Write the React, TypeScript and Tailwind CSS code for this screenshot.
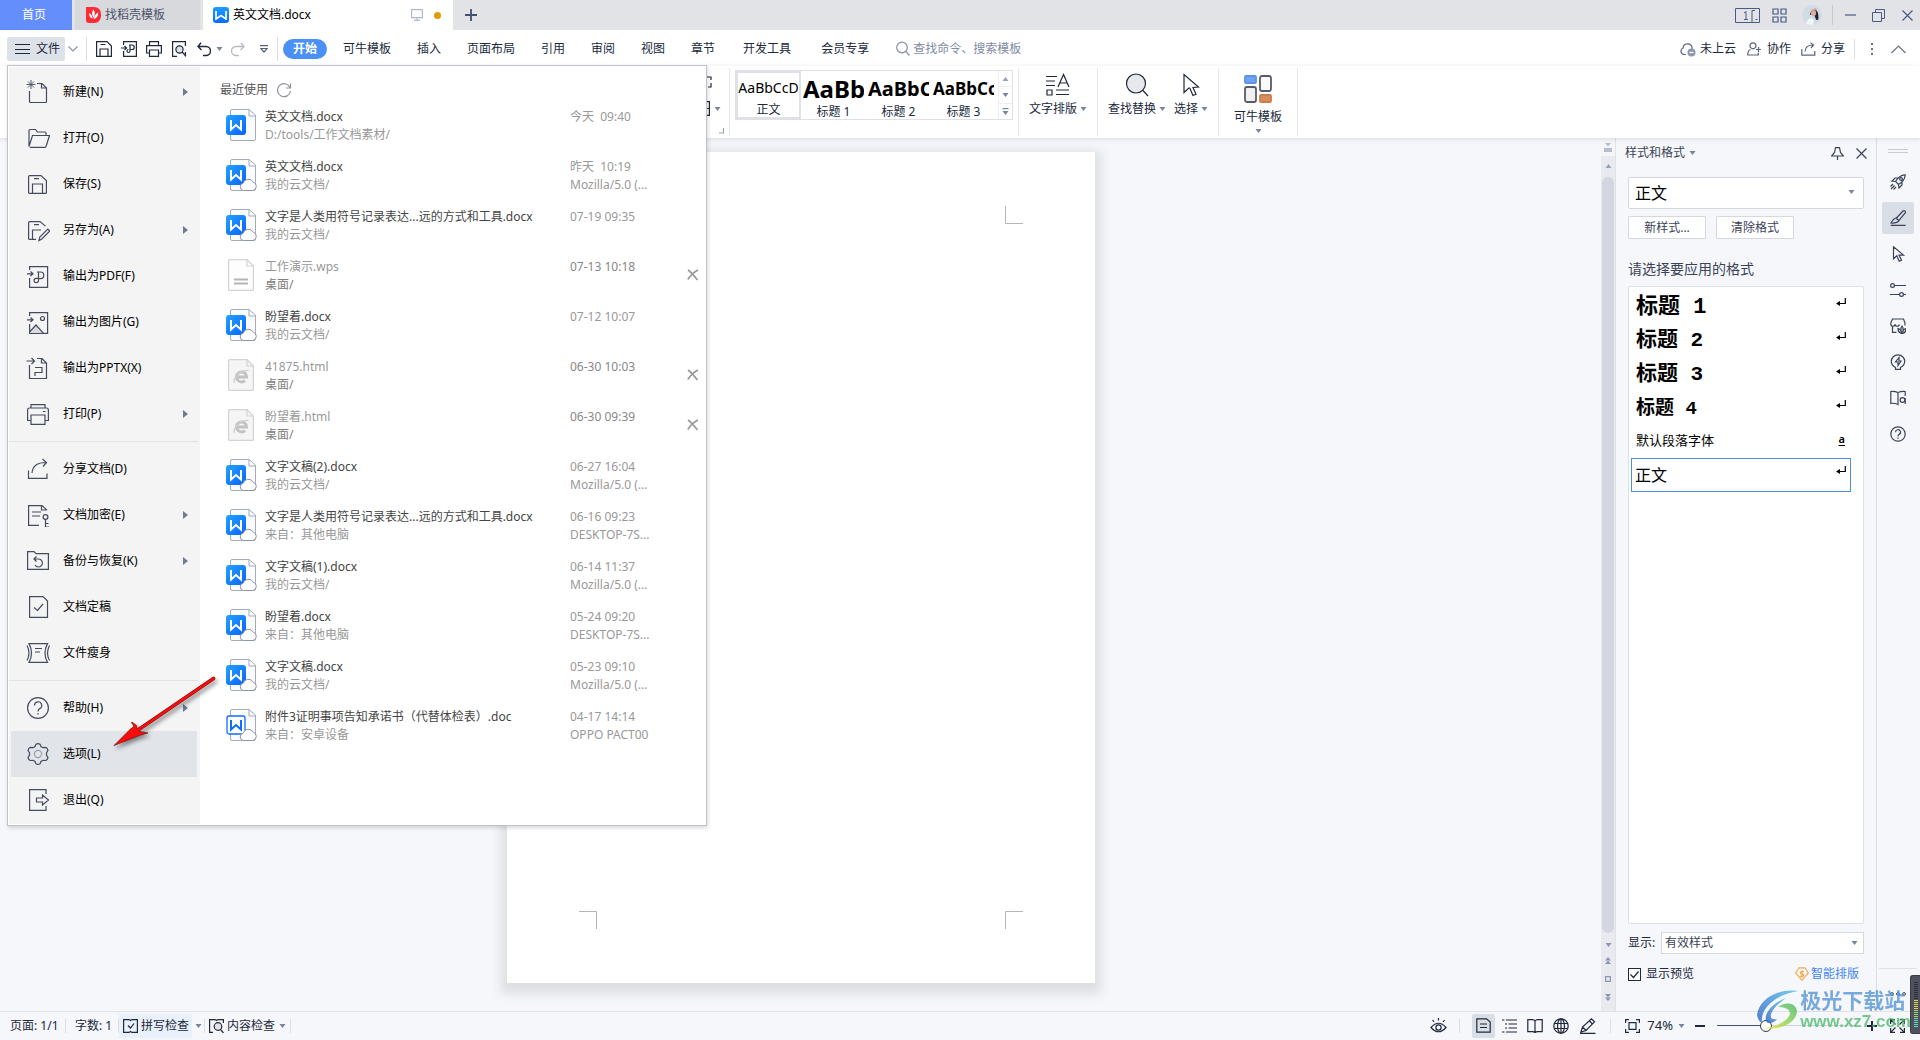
import React from "react";

type IconProps = { w?: number; h?: number; box?: string; className?: string; sw?: number; children: React.ReactNode };

function Svg({ w = 16, h = 16, box, className = "", sw = 1.2, children }: IconProps) {
  return (
    <svg
      width={w}
      height={h}
      viewBox={box ?? `0 0 ${w} ${h}`}
      fill="none"
      stroke="currentColor"
      strokeWidth={sw}
      className={`shrink-0 ${className}`}
      aria-hidden="true"
    >
      {children}
    </svg>
  );
}

function Caret({ className = "text-[#7783a0]" }: { className?: string }) {
  return (
    <Svg w={7} h={4} className={className}>
      <path d="M0.5 0h6L3.5 4z" fill="currentColor" stroke="none" />
    </Svg>
  );
}

function CaretUp() {
  return (
    <Svg w={7} h={4} className="text-[#97a2ba]">
      <path d="M0.5 4h6L3.5 0z" fill="currentColor" stroke="none" />
    </Svg>
  );
}

/* ---------- title bar ---------- */

function TitleBar() {
  return (
    <header className="flex h-[30px] shrink-0 items-stretch bg-[#e1e3e7] text-[12px]">
      <button className="w-[72px] bg-[#648efc] pr-1 text-white">首页</button>
      <button className="ml-[3px] flex w-[125px] items-center gap-1 bg-[#d8d9dc] pl-[11px] text-[#4c5468]">
        <svg width="15" height="16" viewBox="0 0 15 16" className="shrink-0" aria-hidden="true">
          <path d="M0 0h8c4.500 0 7 3 7 8s-2.500 8-7 8H3a3 3 0 0 1-3-3z" fill="#fb2c36" />
          <path d="M7.300 2.500c2 2 2 5 .3 8.500-2-3-2-6-.3-8.500zM3 6c2 .8 3.200 2.500 3.600 5.600C4.300 11 3 9 3 6zM12.300 5.500c0 3.500-1.500 5.800-4.600 6.800.6-3.500 2-5.600 4.600-6.800z" fill="#fff" />
        </svg>
        找稻壳模板
      </button>
      <button className="ml-[3px] flex w-[250px] items-center bg-white pl-[10px] pr-3 text-black">
        <span className="mr-1 flex h-4 w-4 items-center justify-center rounded-[3px] bg-gradient-to-b from-[#1e9bff] to-[#0b6cff] text-white">
          <Svg w={12} h={10} sw={1.7}>
            <path d="M1 1v8L6 5.500 11 9V1" />
          </Svg>
        </span>
        英文文档.docx
        <Svg w={12} h={12} className="ml-auto text-[#b3b9cc]">
          <path d="M.6.6h10.800v8H.6zM6 8.600v3M3 11.400h6" />
        </Svg>
        <span className="ml-[11px] h-[7px] w-[7px] rounded-full bg-[#e59b00]" />
      </button>
      <button className="ml-[11px] w-[14px] text-[#42506f]" aria-label="新建标签">
        <Svg w={14} h={14} sw={1.800}>
          <path d="M7 1v12M1 7h12" />
        </Svg>
      </button>
      <div className="ml-auto flex items-center pr-[7px] text-[#4a5a85]">
        <button aria-label="窗口">
          <Svg w={25} h={15} sw={1}>
            <path d="M.5.500h24v14H.5zM20 2.500h-3v12M9 5l2-1.500v8M9 11.500h4M20.500 11.500h2" />
          </Svg>
        </button>
        <button className="ml-3" aria-label="应用">
          <Svg w={15} h={15}>
            <path d="M1 1h5v5H1zM9 1h5v5H9zM1 9h5v5H1zM9 9h5v5H9z" />
          </Svg>
        </button>
        <button className="ml-[15px]" aria-label="账户">
          <svg width="20" height="20" viewBox="0 0 20 20" aria-hidden="true">
            <circle cx="10" cy="10" r="10" fill="#cfdce4" />
            <path d="M4 19c1-4 3-6 5-6l3 2-1 4.900z" fill="#f1f6f8" />
            <path d="M8 10c0-4 3-6 5.500-5 3 1 3 6 3 9-1 2-3 1-3-1l-2-4z" fill="#2c2430" />
            <ellipse cx="11.500" cy="8" rx="2.600" ry="3" fill="#dcaea6" />
            <path d="M9 5l5-2 1 2-5 1z" fill="#d9a08c" />
          </svg>
        </button>
        <span className="ml-[10px] h-5 w-px bg-[#c4c7cd]" />
        <button className="ml-3" aria-label="最小化">
          <Svg w={11} h={12}>
            <path d="M0 6h11" />
          </Svg>
        </button>
        <button className="ml-4" aria-label="还原">
          <Svg w={13} h={13} sw={1}>
            <path d="M.5 3.500h9v9h-9zM3.500 3.500v-3h9v9h-3" />
          </Svg>
        </button>
        <button className="ml-[17px]" aria-label="关闭">
          <Svg w={11} h={11}>
            <path d="M.5.500l10 10M10.500.500l-10 10" />
          </Svg>
        </button>
      </div>
    </header>
  );
}

/* ---------- menu row ---------- */

const tabs = ["可牛模板", "插入", "页面布局", "引用", "审阅", "视图", "章节"];
const wideTabs = ["开发工具", "会员专享"];

function QuickButton({ label, children, className = "w-[25px]" }: { label: string; children: React.ReactNode; className?: string }) {
  return (
    <button aria-label={label} className={`flex h-6 shrink-0 items-center justify-center ${className}`}>
      {children}
    </button>
  );
}

function MenuRow() {
  return (
    <nav className="flex h-9 shrink-0 items-center bg-white pl-[7px] pr-[13px] pt-[2px] text-[12px] text-[#20283c]">
      <button className="flex h-6 w-[58px] shrink-0 items-center gap-[6px] rounded-[2px] bg-[#dde2e8] pl-2">
        <Svg w={15} h={12} sw={1}>
          <path d="M0 1.500h15M0 6.500h15M0 10.500h15" />
        </Svg>
        文件
      </button>
      <QuickButton label="菜单" className="w-[15px] text-[#8a93a8]">
        <Svg w={10} h={6}>
          <path d="M.5.500L5 5 9.500.500" />
        </Svg>
      </QuickButton>
      <span className="ml-[6px] mr-1 h-6 w-px bg-[#dcdee3]" />
      <QuickButton label="保存">
        <Svg w={16} h={16}>
          <path d="M.6.600h10.400l4.400 4.400v10.400H.6zM4 15V8h8v7M4.500 3.500h5" />
        </Svg>
      </QuickButton>
      <QuickButton label="输出为PDF">
        <Svg w={16} h={16}>
          <path d="M2.600 4V.6h12.800v14.800H2.600V10M0 7h5M3.500 5l2 2-2 2" />
          <path d="M8 4h3a2.200 2.200 0 0 1 0 4.500H9.500M9 4v6a1.500 1.500 0 1 1-1.500-1.500" />
        </Svg>
      </QuickButton>
      <QuickButton label="打印">
        <Svg w={16} h={16}>
          <path d="M3.500 4V.6h9V4M3.500 12H.6V4.600h14.800V12h-2.900M3.500 9h9v6.400h-9z" />
        </Svg>
      </QuickButton>
      <QuickButton label="打印预览">
        <Svg w={16} h={16}>
          <path d="M6 15.400H1.600V.6h12.800V5M14.400 11v4.400" />
          <circle cx="8.500" cy="8.500" r="3.600" fill="#dfe1e6" />
          <path d="M11 11l4 4" />
        </Svg>
      </QuickButton>
      <QuickButton label="撤销">
        <Svg w={14} h={15} sw={1.400}>
          <path d="M4 .8L1 4.500l3.500 3.500M1 4.500h8a4.200 4.200 0 0 1 0 9H6" />
        </Svg>
      </QuickButton>
      <QuickButton label="撤销历史" className="w-[7px]">
        <Caret />
      </QuickButton>
      <QuickButton label="恢复" className="w-[30px] text-[#b6bac3]">
        <Svg w={14} h={15} sw={1.300}>
          <path d="M10 .8l3 3.700-3.500 3.500M13 4.500H5a4.200 4.200 0 0 0 0 9h3" />
        </Svg>
      </QuickButton>
      <QuickButton label="自定义" className="w-[22px] text-[#596273]">
        <Svg w={8} h={8}>
          <path d="M0 .6h8M.8 3.500h6.400L4 7z" />
        </Svg>
      </QuickButton>
      <span className="mx-[2px] h-6 w-px bg-[#dcdee3]" />
      <button className="ml-[3px] mr-[3px] h-5 w-11 shrink-0 rounded-full bg-[#4b91f5] font-bold text-white">开始</button>
      {tabs.map((t) => (
        <button key={t} className="shrink-0 px-[13px]">
          {t}
        </button>
      ))}
      {wideTabs.map((t) => (
        <button key={t} className="shrink-0 px-[15px]">
          {t}
        </button>
      ))}
      <label className="ml-3 flex items-center gap-[3px] text-[#8791ab]">
        <Svg w={14} h={16}>
          <circle cx="6" cy="6.500" r="5.300" />
          <path d="M10 10.500l3.500 4" />
        </Svg>
        <input
          className="w-[120px] bg-transparent outline-none placeholder:text-[#7f8aa6]"
          placeholder="查找命令、搜索模板"
          aria-label="查找命令、搜索模板"
        />
      </label>
      <div className="ml-auto flex shrink-0 items-center">
        <button className="flex items-center gap-1">
          <Svg w={16} h={15} className="text-[#5b647c]">
            <path d="M6 12.500H4a3.400 3.400 0 0 1-1-6.500A4.600 4.600 0 0 1 12 5.200V7" />
            <circle cx="11.500" cy="10.500" r="4" fill="#8f98af" stroke="none" />
            <path d="M9.500 10.500h4" stroke="#fff" />
          </Svg>
          未上云
        </button>
        <button className="ml-[11px] flex items-center gap-1">
          <Svg w={16} h={14} className="text-[#5b647c]">
            <circle cx="6" cy="3.800" r="3" />
            <path d="M3.500 7.500C1.500 8 .8 9.500.8 13h10.500V10.500M9 7.500h5M11.500 5v5" />
          </Svg>
          协作
        </button>
        <button className="ml-[10px] flex items-center gap-1">
          <Svg w={16} h={14} className="text-[#5b647c]">
            <path d="M.8 7v6.200h13V9M4 9.500c.3-4 3-6.500 8-6.500M9.500.6L12.500 3 10 6" />
          </Svg>
          分享
        </button>
        <span className="ml-[9px] h-5 w-px bg-[#dcdee3]" />
        <button className="ml-4 text-[#6b7285]" aria-label="更多">
          <Svg w={2} h={12}>
            <path d="M0 0h2v2H0zM0 5h2v2H0zM0 10h2v2H0z" fill="currentColor" stroke="none" />
          </Svg>
        </button>
        <button className="ml-[18px] mr-px text-[#6b7285]" aria-label="折叠功能区">
          <Svg w={15} h={9}>
            <path d="M.5 8L7.500 1l7 7" />
          </Svg>
        </button>
      </div>
    </nav>
  );
}

/* ---------- ribbon ---------- */

function Divider() {
  return <span className="h-[68px] w-px shrink-0 self-center bg-[#e7e8ec]" />;
}

const gallery = [
  { name: "标题 1", sample: "AaBb", cls: "text-[24px] font-bold" },
  { name: "标题 2", sample: "AaBbC", cls: "text-[20px] font-bold" },
  { name: "标题 3", sample: "AaBbCc", cls: "text-[17px] font-bold" },
];

function Ribbon() {
  return (
    <section className="relative z-10 flex h-[72px] shrink-0 bg-white text-[12px] text-[#20283c] shadow-[0_1px_5px_rgba(0,0,0,0.12)]">
      <div className="flex w-[729px] shrink-0 flex-col items-end pr-[5px] pt-[10px]">
        <Svg w={16} h={12} className="mr-[12px]">
          <path d="M1 4V1h14v3M15 7v4h-3M1 7v4" />
        </Svg>
        <div className="mt-[13px] flex items-center gap-1 pr-[3px]">
          <Svg w={14} h={15}>
            <path d="M.6.600h12.800v13.800H.6zM9 7.500h4" />
          </Svg>
          <Caret />
        </div>
        <Svg w={5} h={6} className="mt-auto mb-1 text-[#97a2ba]">
          <path d="M0 5h4.500V0" />
        </Svg>
      </div>
      <Divider />
      <div className="ml-[5px] mt-1 flex h-[50px] w-[278px] shrink-0 border border-[#dfe1e6]">
        <button className="w-[65px] shrink-0 border-2 border-[#dfe1e6]">
          <span className="block h-[30px] overflow-hidden whitespace-nowrap text-[14px] leading-[30px] text-black">AaBbCcD</span>
          <span className="block leading-[14px]">正文</span>
        </button>
        {gallery.map((g) => (
          <button key={g.name} className="w-[65px] shrink-0 px-[2px] pt-[2px]">
            <span className={`block h-[30px] overflow-hidden whitespace-nowrap text-left leading-[28px] text-black ${g.cls}`}>
              {g.sample}
            </span>
            <span className="block leading-[13px]">{g.name}</span>
          </button>
        ))}
        <div className="ml-auto flex w-[14px] flex-col border-l border-[#eceef2]">
          <button aria-label="上一行" className="flex h-4 items-center justify-center border-b border-[#eceef2]">
            <CaretUp />
          </button>
          <button aria-label="下一行" className="flex h-[17px] items-center justify-center border-b border-[#eceef2]">
            <Caret />
          </button>
          <button aria-label="更多样式" className="flex flex-1 flex-col items-center justify-center gap-[2px] text-[#7783a0]">
            <Svg w={7} h={7}>
              <path d="M.5.600h6" />
              <path d="M.5 3h6L3.500 7z" fill="currentColor" stroke="none" />
            </Svg>
          </button>
        </div>
      </div>
      <span className="w-[5px]" />
      <Divider />
      <button className="flex w-[78px] shrink-0 flex-col items-center pt-[7px]">
        <Svg w={26} h={24}>
          <path d="M1 3.500h11M1 8h9M1 12.500h9M2 17h5v5H2zM11 17h13M11 21.500h13M13 14L18.500 1.500 24 14M14.500 10h8" />
        </Svg>
        <span className="mt-1 flex items-center gap-[3px] leading-4">
          文字排版
          <Caret />
        </span>
      </button>
      <Divider />
      <button className="ml-2 flex w-[62px] shrink-0 flex-col items-center pt-[7px]">
        <Svg w={24} h={24}>
          <circle cx="11" cy="10.500" r="9.500" fill="#e6e8ec" />
          <path d="M18 17.500l5 5.500" />
        </Svg>
        <span className="mt-1 flex items-center gap-[3px] leading-4">
          查找替换
          <Caret />
        </span>
      </button>
      <button className="ml-1 mr-2 flex w-[38px] shrink-0 flex-col items-center pt-[7px]">
        <Svg w={18} h={24}>
          <path d="M2 1.500v18l4.800-4.500h1L11 22.500l3-1.300-3-6.700 5.500-.5z" />
        </Svg>
        <span className="mt-1 flex items-center gap-[3px] leading-4">
          选择
          <Caret />
        </span>
      </button>
      <Divider />
      <button className="flex w-[78px] shrink-0 flex-col items-center pt-[9px]">
        <Svg w={28} h={28} sw={1.800} className="text-[#585c66]">
          <rect x="1" y="1" width="11" height="7" rx="1" fill="#71a4f0" stroke="#5b93ea" />
          <rect x="16" y="1" width="11" height="15" rx="2" fill="#fafafa" />
          <rect x="1" y="12" width="11" height="15" rx="2" fill="#f0f0f0" />
          <rect x="16" y="20" width="11" height="7" rx="1" fill="#d98c5c" stroke="#cd7d4d" />
        </Svg>
        <span className="mt-[6px] leading-4">可牛模板</span>
        <span className="mt-1">
          <Caret />
        </span>
      </button>
      <Divider />
    </section>
  );
}

/* ---------- file menu ---------- */

const icons: Record<string, React.ReactNode> = {
  new: (
    <>
      <path d="M3.500 11v10.500q0 1 1 1h15q1 0 1-1V8L16 3.500h-5M15.500 3.500V8h5" />
      <path d="M5 0v9M.5 4.500h9M2 1.500l6 6M8 1.500l-6 6" strokeWidth="0.900" />
    </>
  ),
  open: <path d="M3 20.500V4.500q0-1 1-1h5.500l2 2.500H19q1 0 1 1v2M3 20.500L6.500 9.500h17L20 20.500q-.3.800-1.200.8H3.800" />,
  save: <path d="M2.600 4.600q0-1 1-1H15l5.400 4.900v11.900q0 1-1 1H3.600q-1 0-1-1zM6.500 21V12h10v9M8 6.600h5" />,
  saveAs: (
    <>
      <path d="M10 21.400H3.600q-1 0-1-1V4.600q0-1 1-1H14l5.500 4.500M6.500 21V12H15M8 6.600h5" />
      <path d="M13 22.500l.8-3.500 8-8 2 2-8 8z" />
    </>
  ),
  pdf: (
    <>
      <path d="M3.600 6V2.600h18v20.800h-18V14M1 9.800h6M4.500 7.500L7 9.800 4.500 12" />
      <path d="M11 8h3.500a3.300 3.300 0 0 1 0 6.600h-2M12.500 8v8.500a2.200 2.200 0 1 1-2.200-2.200h2.200" />
    </>
  ),
  image: (
    <>
      <path d="M3.600 6V2.600h18v20.800h-18V14M1 9.800h6M4.500 7.500L7 9.800 4.500 12" />
      <circle cx="16.500" cy="8.500" r="2" />
      <path d="M4 23l6-8 6 8z" fill="#d8dadf" stroke="none" />
      <path d="M4 21.500l6-6.500 7.500 8.400" />
    </>
  ),
  pptx: (
    <>
      <path d="M3.500 9v13.500h17V7L16 2.500h-5M15.500 2.500V7h5M.5 5h8M5.500 2l3 3-3 3" />
      <path d="M9 11.500h7v5H9V20" />
    </>
  ),
  print: <path d="M5 6V2.600h14V6M5 18.500H1.600V8q0-2 2-2h16.800q2 0 2 2v10.500H19M5 13h14v9.400H5zM17 9.500h2.500" />,
  share: <path d="M2.500 13.500v7.900h18.500v-5M6 16C6.500 8.500 12 5.500 20 5.500M16.500 2l4 3.500-3.500 4" />,
  lock: (
    <>
      <path d="M13 22.400H2.600V2.600H16l5 4.500M15.500 2.600V7h5M6 9h9M6 13h8" />
      <circle cx="19.500" cy="14" r="2.400" />
      <path d="M19.500 16.500v7.500h3.500M19.500 20.500h3" />
    </>
  ),
  backup: <path d="M1.600 2.600h6.400l2 2h12.400v15.800H1.600zM8 10h4.500a4 4 0 1 1-3.500 6M10.500 7.500L8 10l2.500 2.500" />,
  final: <path d="M3.600 1.600H17l4.500 4.500v16.300H3.600zM8 12.500l3.500 3 5.500-6.500" />,
  slim: <path d="M3 2.600h18.500q-5 9.400 0 18.800H3Q8 12 3 2.600zM9 7.500h7M9 11h5M1 4.500q4 7.500 0 15M23.500 4.500q-4 7.500 0 15" />,
  help: (
    <>
      <circle cx="12" cy="12" r="10.400" />
      <path d="M8.500 9.500a3.600 3.600 0 1 1 5.200 3.100q-1.700.9-1.700 3M12 17v1.500" />
    </>
  ),
  gear: (
    <>
      <path d="M10 2.200q2-1.300 4 0l1 2.300 2 1.200 2.800-.3q1.500.5 2.200 3l-1.500 2.400v2.400l1.500 2.300q-.6 2.500-2.200 3l-2.800-.2-2 1.200-1 2.300q-2 1.200-4 0l-1-2.300-2-1.200-2.800.2Q2.600 18 2 15.500l1.500-2.300v-2.400L2 8.400q.6-2.500 2.200-3l2.800.3 2-1.200z" />
      <circle cx="12" cy="12" r="3.600" className="text-[#9aa0ae]" stroke="currentColor" />
    </>
  ),
  exit: <path d="M20 6V1.600H3.600v20.800H20V18M10.500 10h6V7l6 5-6 5v-3h-6z" />,
};

type MenuItem = { icon: string; label: string; sub?: boolean; active?: boolean };

const menuGroups: MenuItem[][] = [
  [
    { icon: "new", label: "新建(N)", sub: true },
    { icon: "open", label: "打开(O)" },
    { icon: "save", label: "保存(S)" },
    { icon: "saveAs", label: "另存为(A)", sub: true },
    { icon: "pdf", label: "输出为PDF(F)" },
    { icon: "image", label: "输出为图片(G)" },
    { icon: "pptx", label: "输出为PPTX(X)" },
    { icon: "print", label: "打印(P)", sub: true },
  ],
  [
    { icon: "share", label: "分享文档(D)" },
    { icon: "lock", label: "文档加密(E)", sub: true },
    { icon: "backup", label: "备份与恢复(K)", sub: true },
    { icon: "final", label: "文档定稿" },
    { icon: "slim", label: "文件瘦身" },
  ],
  [
    { icon: "help", label: "帮助(H)", sub: true },
    { icon: "gear", label: "选项(L)", active: true },
    { icon: "exit", label: "退出(Q)" },
  ],
];

type Kind = "local" | "cloud" | "wps" | "html" | "doc";
type Recent = { name: string; path: string; date: string; from?: string; kind: Kind };

const recents: Recent[] = [
  { name: "英文文档.docx", path: "D:/tools/工作文档素材/", date: "今天\u00a0 09:40", kind: "local" },
  { name: "英文文档.docx", path: "我的云文档/", date: "昨天\u00a0 10:19", from: "Mozilla/5.0 (...", kind: "cloud" },
  { name: "文字是人类用符号记录表达...远的方式和工具.docx", path: "我的云文档/", date: "07-19 09:35", kind: "cloud" },
  { name: "工作演示.wps", path: "桌面/", date: "07-13 10:18", kind: "wps" },
  { name: "盼望着.docx", path: "我的云文档/", date: "07-12 10:07", kind: "cloud" },
  { name: "41875.html", path: "桌面/", date: "06-30 10:03", kind: "html" },
  { name: "盼望着.html", path: "桌面/", date: "06-30 09:39", kind: "html" },
  { name: "文字文稿(2).docx", path: "我的云文档/", date: "06-27 16:04", from: "Mozilla/5.0 (...", kind: "cloud" },
  { name: "文字是人类用符号记录表达...远的方式和工具.docx", path: "来自：其他电脑", date: "06-16 09:23", from: "DESKTOP-7S...", kind: "cloud" },
  { name: "文字文稿(1).docx", path: "我的云文档/", date: "06-14 11:37", from: "Mozilla/5.0 (...", kind: "cloud" },
  { name: "盼望着.docx", path: "来自：其他电脑", date: "05-24 09:20", from: "DESKTOP-7S...", kind: "cloud" },
  { name: "文字文稿.docx", path: "我的云文档/", date: "05-23 09:10", from: "Mozilla/5.0 (...", kind: "cloud" },
  { name: "附件3证明事项告知承诺书（代替体检表）.doc", path: "来自：安卓设备", date: "04-17 14:14", from: "OPPO PACT00", kind: "doc" },
];

function FileIcon({ kind }: { kind: Kind }) {
  if (kind === "wps" || kind === "html") {
    return (
      <Svg w={32} h={34} className="text-[#d3d3d3]">
        <path d="M2.600 2.600q0-1 1-1H21l6.400 6.400v23.400q0 1-1 1H3.600q-1 0-1-1z" fill={kind === "html" ? "#f5f5f5" : "#fdfdfd"} />
        <path d="M21 1.600V8h6.400" />
        {kind === "wps" ? (
          <path d="M8 21.500h14M8 25.500h14" stroke="#b5b5b5" strokeWidth="2" />
        ) : (
          <>
            <path d="M10.500 19h10a5 5 0 1 0-1.500 3.500" stroke="#c2c2c2" strokeWidth="3" />
            <path d="M8.500 25C6 21 15 11.500 22.500 12.500" stroke="#cfcfcf" strokeWidth="1.400" />
          </>
        )}
      </Svg>
    );
  }
  const outlined = kind === "doc";
  return (
    <Svg w={32} h={34} className="text-[#a3abbd]" sw={1}>
      <path d="M4.500 3q0-1.500 1.500-1.500h17L29.500 7v24q0 1.500-1.500 1.500H6q-1.500 0-1.500-1.500z" fill="#fbfcfd" />
      <path d="M23 1.500V8h6.500" />
      <defs>
        <linearGradient id="wfill" x1="0" y1="0" x2="1" y2="1">
          <stop offset="0" stopColor="#22a3ff" />
          <stop offset="1" stopColor="#0a62ff" />
        </linearGradient>
      </defs>
      {outlined ? (
        <rect x="1" y="8" width="18" height="18" rx="2" fill="#fff" stroke="#0d6dff" strokeWidth="1.300" />
      ) : (
        <rect x="0" y="7" width="20" height="20" rx="3" fill="url(#wfill)" stroke="none" />
      )}
      <path d="M5 12v9.500l5-4.500 5 4.500V12" stroke={outlined ? "#0d6dff" : "#fff"} strokeWidth="2" />
      {kind !== "local" && (
        <path
          d="M17.500 32.500a3.700 3.700 0 0 1-.3-7.300 5.400 5.400 0 0 1 10-1 4.300 4.300 0 0 1-.2 8.300z"
          fill="#fff"
          stroke="#8e94a3"
        />
      )}
    </Svg>
  );
}

function FileMenu() {
  return (
    <div className="absolute left-[7px] top-[65px] z-20 flex w-[700px] border border-[#bfc2c8] bg-white text-[12px] shadow-[1px_2px_4px_rgba(0,0,0,0.15)]">
      <nav className="m-px w-[191px] shrink-0 bg-[#f4f4f4] pb-px pt-[2px] text-black">
        {menuGroups.map((group, i) => (
          <div key={i}>
            {i > 0 && (
              <div className="mr-[2px] h-[9px] pt-1">
                <div className="h-px bg-[#e2e3e6]" />
              </div>
            )}
            {group.map((item) => (
              <button
                key={item.label}
                className={`mx-[2px] flex h-[46px] w-[186px] items-center pl-[15px] pr-[9px] ${item.active ? "bg-[#e1e4e9]" : ""}`}
              >
                <Svg w={24} h={24} className="text-[#454b5e]">
                  {icons[item.icon]}
                </Svg>
                <span className="ml-[13px]">{item.label}</span>
                {item.sub && (
                  <Svg w={5} h={8} className="ml-auto text-[#6e7b98]">
                    <path d="M0 0v8l5-4z" fill="currentColor" stroke="none" />
                  </Svg>
                )}
              </button>
            ))}
          </div>
        ))}
      </nav>
      <div className="min-w-0 flex-1 pl-[19px]">
        <div className="flex h-[38px] items-center gap-2 pt-[10px] text-[#555]">
          最近使用
          <button aria-label="刷新">
            <Svg w={16} h={16} className="text-[#8f939c]">
              <path d="M14 5.500A6.500 6.500 0 1 0 14.500 9M14.500 1.500v4.500H10" />
            </Svg>
          </button>
        </div>
        <ul>
          {recents.map((r, i) => {
            const gone = r.kind === "wps" || r.kind === "html";
            return (
              <li key={i} className="flex h-[50px] items-start pt-1 leading-[18px] text-[#999]">
                <span className="ml-[6px]">
                  <FileIcon kind={r.kind} />
                </span>
                <a href="#open" className="ml-[7px] w-[305px] shrink-0 whitespace-nowrap">
                  <span className={`block ${gone ? "text-[#999]" : "text-[#444]"}`}>{r.name}</span>
                  <span className={`block ${gone ? "text-[#808080]" : ""}`}>{r.path}</span>
                </a>
                <div className={`w-[117px] shrink-0 whitespace-nowrap ${gone ? "text-[#888]" : ""}`}>
                  <div>{r.date}</div>
                  <div>{r.from}</div>
                </div>
                {gone && (
                  <button aria-label="移除" className="mt-[11px]">
                    <Svg w={12} h={12} sw={1.600} className="text-[#999]">
                      <path d="M1 1q4 3 9.500 10M11 1Q5 4 .8 10.500" />
                    </Svg>
                  </button>
                )}
              </li>
            );
          })}
        </ul>
      </div>
    </div>
  );
}

/* ---------- workspace ---------- */

function Mark({ className, d }: { className: string; d: string }) {
  return (
    <Svg w={18} h={18} sw={1} className={`absolute text-[#b5b5b5] ${className}`}>
      <path d={d} />
    </Svg>
  );
}

function Canvas() {
  return (
    <main className="flex min-w-0 flex-1 justify-center overflow-hidden pt-[14px]">
      <article className="relative h-[831px] w-[588px] shrink-0 bg-white shadow-[0_5px_10px_6px_rgba(50,54,64,0.12)]">
        <Mark className="left-[72px] top-[54px]" d="M17.500 0v17.500H0" />
        <Mark className="right-[72px] top-[54px]" d="M.5 0v17.500H18" />
        <Mark className="bottom-[54px] left-[72px]" d="M17.500 18V.5H0" />
        <Mark className="bottom-[54px] right-[72px]" d="M.5 18V.5H18" />
      </article>
    </main>
  );
}

function ScrollBar() {
  return (
    <div className="flex w-[14px] shrink-0 flex-col items-center bg-[#e9eaf0] text-[#8b96b0]">
      <div className="flex h-[18px] w-full items-center justify-center bg-[#f5f6f8] text-[#b6bccd]">
        <Svg w={8} h={9}>
          <path d="M1 0h6L4 3.500zM0 5h8v4H0z" fill="currentColor" stroke="none" />
        </Svg>
      </div>
      <button aria-label="向上滚动" className="flex h-[21px] items-center pb-[2px]">
        <CaretUp />
      </button>
      <div className="w-3 flex-1 rounded-full bg-[#d3d6e0]" />
      <button aria-label="向下滚动" className="flex h-[24px] items-center">
        <Caret className="text-[#8b96b0]" />
      </button>
      <div className="flex h-[54px] flex-col items-center gap-[12px]">
        <Svg w={6} h={7}>
          <path d="M0 3.500h6L3 0zM0 7h6L3 3.500z" fill="currentColor" stroke="none" />
        </Svg>
        <Svg w={6} h={6}>
          <path d="M.6.600h4.800v4.800H.6z" />
        </Svg>
        <Svg w={6} h={7}>
          <path d="M0 0h6L3 3.500zM0 3.500h6L3 7z" fill="currentColor" stroke="none" />
        </Svg>
      </div>
    </div>
  );
}

function ReturnMark() {
  return (
    <Svg w={10} h={9} sw={1.200} className="mb-[10px] text-black">
      <path d="M9.300 0v5.500H2" />
      <path d="M0 5.500L4 3v5z" fill="currentColor" stroke="none" />
    </Svg>
  );
}

const styleItems = [
  { name: "标题 1", cls: "text-[22px] font-bold" },
  { name: "标题 2", cls: "text-[21px] font-bold" },
  { name: "标题 3", cls: "text-[21px] font-bold" },
  { name: "标题 4", cls: "text-[19px] font-bold" },
];

const mono = "font-['Liberation_Mono','Noto_Sans_CJK_SC',monospace]";

function SelectArrow({ className }: { className: string }) {
  return (
    <span className={`pointer-events-none absolute ${className}`}>
      <Caret />
    </span>
  );
}

function StylePanel() {
  return (
    <aside className="flex w-[261px] shrink-0 flex-col border-l border-[#e0e2e8] pb-7 pl-3 pr-3 text-[12px] text-[#3b4358]">
      <div className="-mx-[3px] flex h-[30px] shrink-0 items-center">
        <button className="flex items-center gap-1">
          样式和格式
          <Caret />
        </button>
        <button aria-label="固定" className="ml-auto">
          <Svg w={13} h={13}>
            <path d="M4 .6h5M4.500.600L3.500 5.500.6 9h11.800L9.500 5.500l-1-4.900M6.500 9v4" />
          </Svg>
        </button>
        <button aria-label="关闭面板" className="ml-3">
          <Svg w={11} h={11}>
            <path d="M.5.500l10 10M10.500.500l-10 10" />
          </Svg>
        </button>
      </div>
      <div className="relative mt-[9px] shrink-0">
        <select
          aria-label="当前样式"
          className="h-8 w-full appearance-none rounded-[2px] border border-[#d5d8df] bg-white pl-[6px] text-[16px] text-black"
        >
          <option>正文</option>
        </select>
        <SelectArrow className="right-[9px] top-[13px] flex" />
      </div>
      <div className="mt-[7px] flex shrink-0 gap-[10px]">
        <button className="h-[23px] w-[78px] rounded-[1px] border border-[#d5d8df] bg-white">新样式...</button>
        <button className="h-[23px] w-[78px] rounded-[1px] border border-[#d5d8df] bg-white">清除格式</button>
      </div>
      <h2 className="mt-5 shrink-0 text-[14px] leading-5">请选择要应用的格式</h2>
      <ul className="mt-[7px] flex-1 rounded-[2px] border border-[#dfe1e6] bg-white pl-[2px] pr-3 pt-px text-black">
        {styleItems.map((s) => (
          <li key={s.name} className={`flex h-[34px] items-center justify-between pl-[5px] pr-[5px] pt-1 ${mono} ${s.cls}`}>
            {s.name}
            <ReturnMark />
          </li>
        ))}
        <li className="flex h-[34px] items-center justify-between pl-[5px] pr-[6px] text-[13px]">
          默认段落字体
          <span className="pb-1 text-[11px] font-semibold underline underline-offset-2">a</span>
        </li>
        <li className="flex h-[34px] items-center justify-between border border-[#4a90e2] pl-[3px] pr-1 text-[16px]">
          正文
          <ReturnMark />
        </li>
      </ul>
      <div className="mt-2 flex shrink-0 items-center gap-[6px] text-[#20283c]">
        <label htmlFor="shown" className="w-[27px] whitespace-nowrap">
          显示:
        </label>
        <div className="relative flex-1">
          <select
            id="shown"
            className="block h-[22px] w-full appearance-none border border-[#d5d8df] bg-white pl-[3px] text-[12px] text-[#3b4358]"
          >
            <option>有效样式</option>
          </select>
          <SelectArrow className="right-[6px] top-[9px] flex" />
        </div>
      </div>
      <div className="mt-[11px] flex h-[18px] shrink-0 items-center justify-between pr-[5px]">
        <label className="flex items-center gap-[5px] text-[#20283c]">
          <span className="relative flex">
            <input type="checkbox" defaultChecked className="h-[13px] w-[13px] appearance-none border border-[#20283c] bg-white" />
            <Svg w={13} h={13} className="pointer-events-none absolute left-0 top-0">
              <path d="M2.500 6.500l3 3 5-6" />
            </Svg>
          </span>
          显示预览
        </label>
        <a href="#layout" className="flex items-center gap-[2px] text-[#3f84f5]">
          <Svg w={14} h={14} className="text-[#f3ab4c]">
            <path d="M4 .8h6L13.300 6 7 13.300.7 6z" />
            <path d="M9 4.500H6.500a1.200 1.200 0 0 0 0 2.400h1a1.200 1.200 0 0 1 0 2.400H5M7 3.500v7" />
          </Svg>
          智能排版
        </a>
      </div>
    </aside>
  );
}

const sideIcons: { label: string; node: React.ReactNode }[] = [
  {
    label: "快捷工具",
    node: (
      <>
        <path d="M5.500 7.500C8 3 11.500 1 15.200.800 15 4.500 13 8 8.500 10.500zM5.500 7.500L2 7l3-3h3M8.500 10.500l.5 3.500 3-3V8M3 10l-2.500 2.500M4.500 11.500L1 15M6 13l-2.500 2.500" />
        <circle cx="11" cy="5" r="1.400" />
      </>
    ),
  },
  { label: "样式", node: <path d="M.8 15.300h14.700M1 13q2.500-4.500 5-5l3 2.700Q7 13.500 1 13zM6.500 8L13 1q1-.8 2 .2t0 2L9.200 10.200" /> },
  { label: "选择", node: <path d="M3.500.8v12l3.300-3 2.400 5.500 2.300-1-2.500-5.200H13.500z" /> },
  {
    label: "属性",
    node: (
      <>
        <circle cx="2.500" cy="3.500" r="1.900" />
        <circle cx="11.500" cy="12.500" r="1.900" />
        <path d="M4.500 3.500H16M0 12.500h9.500M13.500 12.500H16" />
      </>
    ),
  },
  {
    label: "稻壳",
    node: (
      <>
        <path d="M2.500 8V14.400h4M.8 5L2.500 1h11L15 5v2.500M.8 5v1.500a2.200 2.200 0 0 0 4.300 0 2.200 2.200 0 0 0 4.300 0" />
        <path d="M12 8q2.500 3.500 0 7.500-2.500-4 0-7.500zM8 10.500q3 .5 3.800 5Q8 15 8 10.500zM16 10.500q-3 .5-3.800 5Q16 15 16 10.500z" fill="#c9ccd4" />
      </>
    ),
  },
  { label: "灵感", node: <path d="M5.500 13.500C2.500 12 1.300 10 1.300 7.300a6.700 6.500 0 0 1 13.400 0c0 2.700-1.200 4.700-4.200 6.200v1.900h-5zM9 3.500L5.500 8H8v3.500L11 7H9z" /> },
  {
    label: "查阅",
    node: (
      <>
        <path d="M8 2.500Q4.500 1 .8 1.500v11.800Q5 13 8 14.500zM8 2.500Q11.500 1 15.200 1.500V6" />
        <circle cx="12.500" cy="10" r="2.400" />
        <path d="M15.200 8v6" />
      </>
    ),
  },
  {
    label: "帮助",
    node: (
      <>
        <circle cx="8" cy="8" r="7.200" />
        <path d="M5.500 6.200a2.500 2.500 0 1 1 3.700 2.200Q8 9 8 10.400M8 11.500v1.200" />
      </>
    ),
  },
];

function SideBar() {
  return (
    <aside className="flex w-11 shrink-0 flex-col items-center border-l border-[#dcdee5] pr-px text-[#3b4358]">
      <div className="mb-[13px] mt-[11px] h-1 w-5 border-y border-[#c9ccd4]" />
      <div className="flex flex-col gap-1">
        {sideIcons.map((s) => (
          <button
            key={s.label}
            aria-label={s.label}
            className={`flex h-8 w-8 items-center justify-center rounded-[2px] ${s.label === "样式" ? "bg-[#d9dde5]" : ""}`}
          >
            <Svg w={16} h={16}>{s.node}</Svg>
          </button>
        ))}
      </div>
      <div className="mt-auto flex h-[43px] w-[38px] justify-center border-t border-[#dfe1e6] pt-[23px]">
        <Svg w={16} h={4} sw={1}>
          <circle cx="2" cy="2" r="1.400" />
          <circle cx="8" cy="2" r="1.400" />
          <circle cx="14" cy="2" r="1.400" />
        </Svg>
      </div>
    </aside>
  );
}

/* ---------- status bar ---------- */

function Sep({ className = "" }: { className?: string }) {
  return <span className={`h-[14px] w-px shrink-0 bg-[#dcdee4] ${className}`} />;
}

function StatusBar() {
  return (
    <footer className="flex h-[29px] shrink-0 items-center border-t border-[#e0e2e8] bg-[#f5f7fa] pb-px text-[12px] text-[#20283c]">
      <span className="w-[65px] shrink-0 whitespace-nowrap pl-[10px]">页面: 1/1</span>
      <Sep />
      <span className="w-[52px] shrink-0 whitespace-nowrap pl-[9px]">字数: 1</span>
      <Sep />
      <button className="flex h-6 w-[73px] shrink-0 items-center gap-[3px] bg-[#e8f0fb] pl-1">
        <Svg w={15} h={14}>
          <path d="M6 13.400H.6V.6H6l1.500 1L9 .6h5.400v12.800H9M5 6.500l2.500 2.500 3.500-4.500M6 13.400l1.500-1 1.500 1" />
        </Svg>
        拼写检查
      </button>
      <button aria-label="拼写检查选项" className="flex w-3 justify-center">
        <Caret />
      </button>
      <Sep />
      <button className="ml-1 flex items-center gap-[3px]">
        <Svg w={15} h={14}>
          <path d="M4 13.400H.6V.6H6l1.500 1L9 .6h5.400V4" />
          <circle cx="9" cy="7.500" r="3.800" fill="#dfe2e8" />
          <path d="M11.500 10.500l3 3.500" />
        </Svg>
        内容检查
        <span className="ml-px">
          <Caret />
        </span>
      </button>
      <Sep className="ml-1" />
      <div className="ml-auto flex items-center pr-[15px]">
        <button aria-label="护眼模式">
          <Svg w={17} h={16}>
            <path d="M1 9.500q7.500-8.500 15 0-7.500 8.500-15 0zM8.500 0v2.500M2.500 2l1.500 2M14.500 2L13 4" />
            <circle cx="8.500" cy="9.500" r="2.600" />
          </Svg>
        </button>
        <Sep className="ml-3 mr-3" />
        <button aria-label="页面视图" className="flex h-6 w-[23px] items-center justify-center rounded-[2px] bg-[#d9dde5]">
          <Svg w={15} h={15}>
            <path d="M.8.800h9.700L14.200 4v10.200H.8zM4 6h7M4 9.500h7" />
          </Svg>
        </button>
        <button aria-label="大纲视图" className="ml-[7px]">
          <Svg w={15} h={14}>
            <path d="M0 1h2.500M4 1h11M3 5h2M6.500 5H15M3 9h2M6.500 9H15M0 13h2.500M4 13h11" />
          </Svg>
        </button>
        <button aria-label="阅读视图" className="ml-[10px]">
          <Svg w={16} h={14}>
            <path d="M8 2Q7 .6 5.500.600H.8v12H6L8 13.500l2-.9h5.200v-12H10.500Q9 .6 8 2zM8 2v11" />
          </Svg>
        </button>
        <button aria-label="Web视图" className="ml-[10px]">
          <Svg w={16} h={16}>
            <circle cx="8" cy="8" r="7.200" />
            <ellipse cx="8" cy="8" rx="3.500" ry="7.200" />
            <path d="M1.500 5.500h13M1.500 10.500h13M8 1v14" />
          </Svg>
        </button>
        <button aria-label="写作模式" className="ml-[11px]">
          <Svg w={16} h={16}>
            <path d="M0 15.300h15.500M1 14l1.500-5L11.500.800l3 3L6 12.500zM9.500 3l3 3M2.500 9L6 12.500" />
          </Svg>
        </button>
        <Sep className="ml-[14px] mr-[14px]" />
        <button aria-label="适合窗口">
          <Svg w={15} h={14}>
            <path d="M4 .6H.6V4M11 .6h3.400V4M.6 10v3.400H4M14.400 10v3.400H11M4 3.600h7v6.800H4z" />
          </Svg>
        </button>
        <button className="ml-[7px] flex items-center gap-[5px] text-[13px]">
          74%
          <Caret />
        </button>
        <button aria-label="缩小" className="ml-[10px]">
          <Svg w={10} h={10} sw={2}>
            <path d="M0 5h10" />
          </Svg>
        </button>
        <input
          type="range"
          aria-label="缩放比例"
          min={0}
          max={100}
          defaultValue={34}
          className="ml-3 h-3 w-[139px] appearance-none bg-[linear-gradient(to_right,#42506f_36%,#d0d3da_36%)] bg-[length:100%_1px] bg-center bg-no-repeat [&::-webkit-slider-thumb]:h-3 [&::-webkit-slider-thumb]:w-3 [&::-webkit-slider-thumb]:appearance-none [&::-webkit-slider-thumb]:rounded-full [&::-webkit-slider-thumb]:border [&::-webkit-slider-thumb]:border-[#333a4c] [&::-webkit-slider-thumb]:bg-white"
        />
        <button aria-label="放大" className="ml-[11px]">
          <Svg w={10} h={10} sw={2}>
            <path d="M0 5h10M5 0v10" />
          </Svg>
        </button>
        <button aria-label="全屏" className="ml-[13px]">
          <Svg w={15} h={14}>
            <path d="M5 .6H.6V5M.6.600l4.900 4.900M10 .6h4.400V5M14.400.600L9.500 5.500M.6 9v4.400H5M.6 13.400l4.900-4.900M14.400 9v4.400H10M14.400 13.400L9.500 8.500" />
          </Svg>
        </button>
      </div>
    </footer>
  );
}

/* ---------- overlays ---------- */

function PointerArrow() {
  return (
    <svg
      width="112"
      height="80"
      viewBox="0 0 112 80"
      className="pointer-events-none absolute left-[108px] top-[672px] z-30 drop-shadow-[2px_3px_2px_rgba(0,0,0,0.45)]"
      aria-hidden="true"
    >
      <path d="M105.500 6.500L27 60" stroke="#7d0d0d" strokeWidth="3.600" strokeLinecap="round" />
      <path d="M6 73.500L23.500 56l1.500-.500 1-1.500-2-2.500-.5-1 .5-.500 4.500 3.500 1 4.500 1.500 1.500L40 61l-7.500 2z" fill="#f80c0c" stroke="#7d0d0d" strokeWidth="0.700" />
      <path d="M105.500 6.500L27 60" stroke="#fb0c0c" strokeWidth="2.600" strokeLinecap="round" />
    </svg>
  );
}

function Watermark() {
  return (
    <div className="pointer-events-none absolute bottom-2 right-[9px] z-30 flex items-center gap-[2px] opacity-80">
      <svg width="42" height="42" viewBox="0 0 42 42" aria-hidden="true">
        <defs>
          <linearGradient id="swoosh" x1="0" y1="1" x2="1" y2="0">
            <stop offset="0" stopColor="#2a62c4" />
            <stop offset="1" stopColor="#57c0ee" />
          </linearGradient>
          <linearGradient id="leaf" x1="0" y1="1" x2="1" y2="0">
            <stop offset="0" stopColor="#f2e535" />
            <stop offset="0.500" stopColor="#8fd24c" />
            <stop offset="1" stopColor="#3fb86b" />
          </linearGradient>
        </defs>
        <path d="M42 2C22-1 3 10 1 26c1 5 3 7 5 8C4 20 18 6 42 2z" fill="url(#swoosh)" />
        <path d="M30 9C16 14 8 24 10 32c2 4 8 2 11-2-5 1-7-1-6-5 2-6 8-11 15-16z" fill="url(#swoosh)" />
        <path d="M22 18c8-6 18-4 19 4 0 10-14 20-33 17 12-1 24-7 26-14 0-5-5-7-12-7z" fill="url(#leaf)" />
      </svg>
      <div className="whitespace-nowrap">
        <div className="text-[21px] font-bold leading-6 text-[#5a96d6]">极光下载站</div>
        <div className="font-['Liberation_Sans',sans-serif] text-[17px] font-bold leading-5 text-[#55bb74]">www.xz7.com</div>
      </div>
    </div>
  );
}

function LevelMeter() {
  return (
    <div className="absolute bottom-[6px] right-0 z-40 flex h-[59px] w-[10px] flex-col items-center gap-px rounded-l-[3px] border border-r-0 border-[#3a3c45] bg-[#4f525e] pt-[6px]">
      {Array.from({ length: 23 }, (_, i) => (
        <span key={i} className={`h-px w-1 ${i < 9 ? "bg-[#2d2f38]" : i < 14 ? "bg-[#e8d44a]" : i < 18 ? "bg-[#9edb6a]" : "bg-[#5fe0c0]"}`} />
      ))}
    </div>
  );
}

export default function App() {
  return (
    <div
      lang="zh-CN"
      className="relative flex h-screen min-h-[900px] w-full flex-col overflow-hidden bg-[#f5f7fa] font-['Noto_Sans','Noto_Sans_CJK_SC',sans-serif]"
    >
      <TitleBar />
      <MenuRow />
      <Ribbon />
      <div className="flex min-h-0 flex-1">
        <Canvas />
        <ScrollBar />
        <StylePanel />
        <SideBar />
      </div>
      <StatusBar />
      <FileMenu />
      <PointerArrow />
      <Watermark />
      <LevelMeter />
    </div>
  );
}
